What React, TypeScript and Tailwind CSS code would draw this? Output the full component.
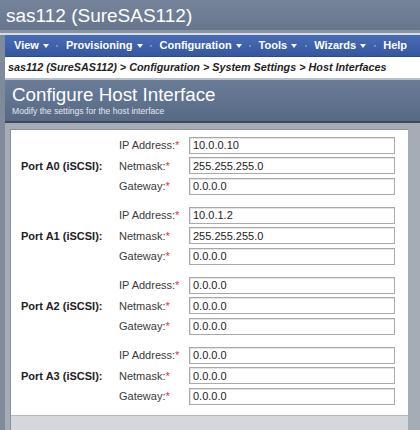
const menu = [
  { label: "View", caret: true },
  { label: "Provisioning", caret: true },
  { label: "Configuration", caret: true },
  { label: "Tools", caret: true },
  { label: "Wizards", caret: true },
  { label: "Help", caret: false },
];

const ports = [
  { name: "Port A0 (iSCSI):", ip: "10.0.0.10", mask: "255.255.255.0", gw: "0.0.0.0" },
  { name: "Port A1 (iSCSI):", ip: "10.0.1.2", mask: "255.255.255.0", gw: "0.0.0.0" },
  { name: "Port A2 (iSCSI):", ip: "0.0.0.0", mask: "0.0.0.0", gw: "0.0.0.0" },
  { name: "Port A3 (iSCSI):", ip: "0.0.0.0", mask: "0.0.0.0", gw: "0.0.0.0" },
];

function Field({ label, value }: { label: string; value: string }) {
  return (
    <div className="flex h-[20.5px] items-center">
      <span className="w-[70px] text-[11px] text-[#3a3a3a]">
        {label}
        <span className="text-[#d33]">*</span>
      </span>
      <div className="flex h-[17px] w-[206px] items-center border border-[#a9a9a9] bg-white px-[3px] text-[11px] text-[#222] shadow-[inset_1px_1px_0_#e4e4e4]">
        {value}
      </div>
    </div>
  );
}

export default function App() {
  return (
    <div className="h-[430px] w-[420px] overflow-hidden bg-[#6c7b90] font-['Liberation_Sans',Arial,sans-serif]">
      <div className="flex h-[30px] items-center bg-gradient-to-b from-[#75849a] to-[#67768c] pl-[6px] text-[19px] leading-none text-white">
        sas112 (SureSAS112)
      </div>
      <div className="h-[3px] bg-[#8893a3]" />
      <div className="h-[2px] bg-[#d8dde4]" />
      <div className="flex flex-col border-l-[5px] border-[#7f8a9a] bg-[#eef0f3]">
        <nav className="flex h-[21px] items-center bg-gradient-to-b from-[#4a6cb5] to-[#3556a0] pl-[9px] text-[11px] font-bold text-white">
          {menu.map((m, i) => (
            <span key={m.label} className="flex items-center">
              {i > 0 && <span className="mx-[7.5px] h-[2px] w-[2px] bg-[#6f8cc6]" />}
              <span>{m.label}</span>
              {m.caret && (
                <span className="ml-[4px] h-0 w-0 border-x-[3.5px] border-t-[4px] border-x-transparent border-t-white" />
              )}
            </span>
          ))}
        </nav>
        <div className="h-[1px] bg-[#2d4a8a]" />
        <div className="flex h-[21px] items-center bg-white pl-[3px] text-[10.8px] font-bold italic text-[#222]">
          sas112 (SureSAS112) &gt; Configuration &gt; System Settings &gt; Host Interfaces
        </div>
        <div className="h-[2px] bg-[#b8c0cc]" />
        <div className="flex h-[41px] flex-col justify-center bg-gradient-to-b from-[#6a7c98] to-[#566985] pl-[7px]">
          <div className="text-[18.8px] leading-[22px] text-white">Configure Host Interface</div>
          <div className="text-[8.6px] leading-[11px] text-[#e4e8ee]">Modify the settings for the host interface</div>
        </div>
        <div className="h-[2px] bg-[#3e4a5c]" />
        <div className="flex bg-[#a6acb5] pt-[6px] pl-[5px]">
          <div className="w-[398px] border-l border-t border-[#8a8f98] bg-white pt-[5px]">
            {ports.map((p) => (
              <div key={p.name} className="flex items-center pb-[8.5px]">
                <span className="w-[108px] pl-[10px] text-[11px] font-bold text-[#222]">{p.name}</span>
                <div className="flex flex-col">
                  <Field label="IP Address:" value={p.ip} />
                  <Field label="Netmask:" value={p.mask} />
                  <Field label="Gateway:" value={p.gw} />
                </div>
              </div>
            ))}
            <div className="h-[20px] border-t border-[#b5b9c0] bg-[#d4d7dc]" />
          </div>
        </div>
      </div>
    </div>
  );
}
